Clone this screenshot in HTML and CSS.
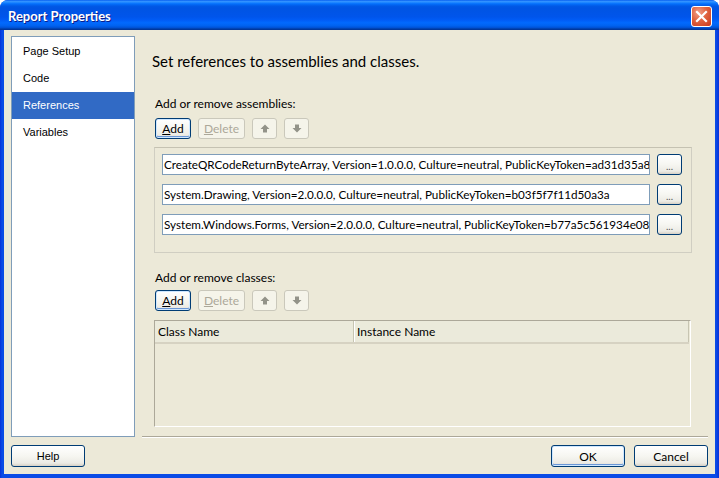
FILE: index.html
```html
<!DOCTYPE html>
<html>
<head>
<meta charset="utf-8">
<link rel="stylesheet" href="styles.css">
</head>
<body>
<div class="window">
  <div class="titlebar">
    <span class="title">Report Properties</span>
    <span class="close"><svg width="13" height="13" viewBox="0 0 13 13"><path d="M2 2 L11 11 M11 2 L2 11" stroke="#fff" stroke-width="2.2" stroke-linecap="square"/></svg></span>
  </div>
  <div class="client">
    <div class="body-row">
      <div class="nav">
        <div class="nav-item">Page Setup</div>
        <div class="nav-item">Code</div>
        <div class="nav-item selected">References</div>
        <div class="nav-item">Variables</div>
      </div>
      <div class="main">
        <div class="heading">Set references to assemblies and classes.</div>
        <div class="label label-first">Add or remove assemblies:</div>
        <div class="toolbar">
          <span class="btn btn-add"><u>A</u>dd</span>
          <span class="btn btn-del disabled"><u>D</u>elete</span>
          <span class="btn btn-arrow disabled"><svg width="10" height="9" viewBox="0 0 10 9"><path d="M5 0.5 L9.5 5 L7 5 L7 8.5 L3 8.5 L3 5 L0.5 5 Z" fill="#939389"/></svg></span>
          <span class="btn btn-arrow disabled"><svg width="10" height="9" viewBox="0 0 10 9"><path d="M5 8.5 L9.5 4 L7 4 L7 0.5 L3 0.5 L3 4 L0.5 4 Z" fill="#939389"/></svg></span>
        </div>
        <div class="panel">
          <div class="ref-row">
            <div class="textbox"><span class="tb-text">CreateQRCodeReturnByteArray, Version=1.0.0.0, Culture=neutral, PublicKeyToken=ad31d35a8</span></div>
            <span class="btn btn-dots">...</span>
          </div>
          <div class="ref-row">
            <div class="textbox"><span class="tb-text">System.Drawing, Version=2.0.0.0, Culture=neutral, PublicKeyToken=b03f5f7f11d50a3a</span></div>
            <span class="btn btn-dots">...</span>
          </div>
          <div class="ref-row">
            <div class="textbox"><span class="tb-text">System.Windows.Forms, Version=2.0.0.0, Culture=neutral, PublicKeyToken=b77a5c561934e08</span></div>
            <span class="btn btn-dots">...</span>
          </div>
        </div>
        <div class="label label-second">Add or remove classes:</div>
        <div class="toolbar">
          <span class="btn btn-add"><u>A</u>dd</span>
          <span class="btn btn-del disabled"><u>D</u>elete</span>
          <span class="btn btn-arrow disabled"><svg width="10" height="9" viewBox="0 0 10 9"><path d="M5 0.5 L9.5 5 L7 5 L7 8.5 L3 8.5 L3 5 L0.5 5 Z" fill="#939389"/></svg></span>
          <span class="btn btn-arrow disabled"><svg width="10" height="9" viewBox="0 0 10 9"><path d="M5 8.5 L9.5 4 L7 4 L7 0.5 L3 0.5 L3 4 L0.5 4 Z" fill="#939389"/></svg></span>
        </div>
        <div class="grid">
          <div class="grid-header">
            <div class="col col-class">Class Name</div>
            <div class="col col-inst">Instance Name</div>
          </div>
        </div>
      </div>
    </div>
    <div class="footer">
      <span class="btn btn-foot btn-help">Help</span>
      <span class="spacer"></span>
      <span class="btn btn-foot btn-ok">OK</span>
      <span class="btn btn-foot">Cancel</span>
    </div>
  </div>
</div>
</body>
</html>
```
FILE: styles.css
```css
* { box-sizing: border-box; }
html, body { margin: 0; padding: 0; background: #ffffff; }
.window {
  width: 719px;
  height: 478px;
  display: flex;
  flex-direction: column;
  background: linear-gradient(to right, #0831d9 0px, #0a4be6 2px, #0a4be6 716px, #0831d9 719px);
  border-radius: 8px 8px 0 0;
  overflow: hidden;
}
.titlebar {
  height: 30px;
  flex: none;
  display: flex;
  align-items: center;
  justify-content: space-between;
  padding: 0 7px 0 8px;
  background: linear-gradient(to bottom, #0058ee 0%, #3593ff 4%, #288eff 7%, #127dff 10%, #036ffc 13%, #0262ee 17%, #0057e5 22%, #0054e3 28%, #0055eb 56%, #005bf5 66%, #026afe 76%, #0062ef 86%, #0052d6 92%, #0040ab 96%, #003092 100%);
}
.title {
  font-family: Lato, "Liberation Sans", sans-serif;
  font-weight: bold;
  font-size: 13px;
  color: #ffffff;
  text-shadow: 1px 1px 0 #0a1e8a;
  padding-top: 1px;
}
.close {
  width: 21px;
  height: 21px;
  border: 1px solid #ffffff;
  border-radius: 3px;
  background: radial-gradient(circle at 35% 30%, #f0a08a 0%, #e0633f 45%, #c8391c 100%);
  display: flex;
  align-items: center;
  justify-content: center;
  margin-top: 3px;
}
.client {
  flex: 1;
  margin: 0 4px 4px 4px;
  background: #ece9d8;
  display: flex;
  flex-direction: column;
}
.body-row {
  display: flex;
  padding: 6px 7px 0 7px;
}
.nav {
  width: 124px;
  height: 401px;
  flex: none;
  background: #ffffff;
  border: 1px solid #7f9db9;
  padding: 1px 0 0 0;
}
.nav-item {
  height: 27px;
  line-height: 27px;
  padding-left: 11px;
  font-family: "Liberation Sans", Arial, sans-serif;
  font-size: 11px;
  color: #000000;
}
.nav-item.selected {
  background: #316ac5;
  color: #ffffff;
}
.main {
  flex: 1;
  margin-left: 7px;
  height: 401px;
  border-bottom: 1px solid #aca899;
  box-shadow: 0 1px 0 #ffffff;
  padding-left: 12px;
  display: flex;
  flex-direction: column;
  font-family: Lato, "Open Sans", sans-serif;
}
.heading {
  margin-top: 15px;
  margin-left: -2px;
  height: 20px;
  line-height: 20px;
  font-size: 15px;
  color: #000000;
}
.label {
  height: 14px;
  line-height: 14px;
  font-size: 12px;
  margin-left: 1px;
  color: #000000;
}
.label-first { margin-top: 26px; }
.label-second { margin-top: 18px; }
.toolbar {
  display: flex;
  gap: 7px;
  margin-left: 1px;
  height: 21px;
}
.label-first + .toolbar { margin-top: 7px; }
.label-second + .toolbar { margin-top: 5px; }
.btn {
  display: inline-flex;
  align-items: center;
  justify-content: center;
  border: 1px solid #003c74;
  border-radius: 3px;
  background: linear-gradient(to bottom, #ffffff 0%, #f6f6f1 50%, #ecebe5 85%, #d6d0c5 100%);
  font-family: Lato, "Open Sans", sans-serif;
  font-size: 12px;
  color: #000000;
}
.btn.disabled {
  border-color: #cac8bb;
  background: #f5f4ea;
  color: #aca899;
}
.btn-add {
  width: 36px;
  height: 21px;
  box-shadow: inset 0 0 0 1px #cee7ff, inset 0 -1px 0 1px #6b97d6;
}
.btn-del { width: 47px; height: 21px; }
.btn-arrow { width: 25px; height: 21px; }
.panel {
  margin-top: 8px;
  width: 538px;
  height: 106px;
  border: 1px solid #d0cec2;
  border-top-color: #c5c2b2;
  padding: 6px 0 0 7px;
  display: flex;
  flex-direction: column;
  gap: 9px;
}
.ref-row {
  display: flex;
  align-items: center;
  gap: 7px;
  height: 21px;
}
.textbox {
  width: 488px;
  height: 21px;
  border: 1px solid #7f9db9;
  background: #ffffff;
  font-size: 11.7px;
  line-height: 19px;
  padding-left: 1px;
  white-space: nowrap;
  overflow: hidden;
  color: #000000;
}
.tb-text { display: inline-block; }
.btn-dots {
  width: 25px;
  height: 21px;
  font-size: 10px;
  padding-top: 3px;
  color: #555555;
}
.grid {
  margin-top: 9px;
  width: 537px;
  height: 107px;
  border-top: 1px solid #aca899;
  border-left: 1px solid #aca899;
  border-right: 1px solid #ffffff;
  border-bottom: 1px solid #ffffff;
}
.grid-header {
  display: flex;
  height: 23px;
  background: #ebeadb;
  border-bottom: 2px solid #d6d2c2;
  margin-right: 1px;
}
.col {
  font-size: 12px;
  line-height: 21px;
  padding-left: 3px;
  color: #000000;
}
.col-class {
  width: 199px;
  border-right: 1px solid #c7c5b2;
  box-shadow: 1px 0 0 #ffffff;
}
.col-inst {
  flex: 1;
  border-right: 1px solid #c7c5b2;
}
.footer {
  display: flex;
  padding: 8px 7px 0 7px;
  gap: 9px;
}
.spacer { flex: 1; }
.btn-foot {
  width: 74px;
  height: 22px;
  font-size: 12px;
}
.btn-help {
  font-family: "Liberation Sans", Arial, sans-serif;
  font-size: 11px;
}
.btn-ok {
  box-shadow: inset 0 0 0 1px #cee7ff, inset 0 -1px 0 1px #6b97d6;
}
```
